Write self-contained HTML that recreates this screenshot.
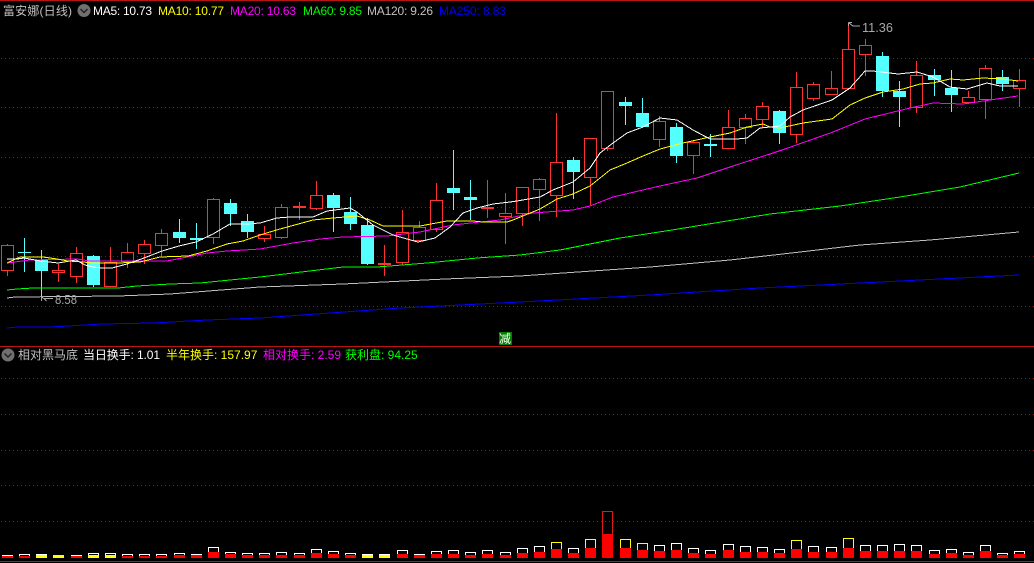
<!DOCTYPE html>
<html><head><meta charset="utf-8"><style>
html,body{margin:0;padding:0;background:#000;width:1034px;height:563px;overflow:hidden}
svg{display:block}
text{font-family:"Liberation Sans","WenQuanYi Zen Hei","Noto Sans CJK SC",sans-serif;font-size:12px}
</style></head><body>
<svg width="1034" height="563" viewBox="0 0 1034 563" xmlns="http://www.w3.org/2000/svg" shape-rendering="crispEdges">
<rect width="1034" height="563" fill="#000"/>
<g stroke="#9a1414" stroke-width="1" stroke-dasharray="1 3" fill="none">
<path d="M1 58.5H1034M1 107.5H1034M1 157.5H1034M1 207.5H1034M1 256.5H1034M1 306.5H1034M1 378.5H1034M1 414.5H1034M1 450.5H1034M1 485.5H1034M1 521.5H1034"/>
</g>
<path d="M0 .5H1034M0 346.5H1034M0 561.5H1034" stroke="#b81414" fill="none"/>

<!-- wicks red -->
<path stroke="#ff3232" fill="none" d="M7.5 244V276M58.5 264V282M76.5 247V283M110.5 247V287M127.5 243V268M144.5 240V264M161.5 229V256M213.5 198V244M264.5 226V242M281.5 204V239M299.5 202V220M316.5 181V210M384.5 245V276M402.5 210V265M419.5 221V242M436.5 183V232M487.5 180V218M505.5 193V244M522.5 187V226M539.5 178V221M556.5 113V217M590.5 138V205M607.5 91V151M659.5 116V147M693.5 141V174M728.5 110V149M745.5 114V144M762.5 102V128M796.5 72V143M813.5 82V101M831.5 71V95M848.5 24V89M865.5 39V76M916.5 61V113M968.5 91V104M985.5 65V119M1019.5 69V107"/>
<!-- bodies red -->
<path stroke="#ff3232" fill="#000" d="M1.5 245.5h12v25h-12zM52.5 270.5h12v2h-12zM70.5 253.5h12v23h-12zM104.5 262.5h12v24h-12zM121.5 252.5h12v9h-12zM138.5 244.5h12v9h-12zM155.5 233.5h12v12h-12zM207.5 199.5h12v38h-12zM258.5 234.5h12v4h-12zM275.5 207.5h12v30h-12zM293.5 206.5h12v1h-12zM310.5 195.5h12v13h-12zM378.5 263.5h12v1h-12zM396.5 232.5h12v30h-12zM413.5 227.5h12v13h-12zM430.5 200.5h12v29h-12zM481.5 207.5h12v1h-12zM499.5 213.5h12v3h-12zM516.5 187.5h12v26h-12zM533.5 179.5h12v10h-12zM550.5 162.5h12v33h-12zM584.5 138.5h12v39h-12zM601.5 91.5h12v57h-12zM653.5 121.5h12v18h-12zM687.5 142.5h12v13h-12zM722.5 127.5h12v21h-12zM739.5 118.5h12v9h-12zM756.5 106.5h12v13h-12zM790.5 87.5h12v47h-12zM807.5 84.5h12v14h-12zM825.5 88.5h12v6h-12zM842.5 49.5h12v39h-12zM859.5 45.5h12v9h-12zM910.5 75.5h12v32h-12zM962.5 97.5h12v5h-12zM979.5 68.5h12v31h-12zM1013.5 80.5h12v8h-12z"/>
<!-- cyan -->
<path stroke="#54ffff" fill="none" d="M24.5 238V272M41.5 250V298M93.5 255V287M179.5 219V243M196.5 223V249M230.5 199V226M247.5 214V238M333.5 193V232M350.5 197V230M367.5 218V265M453.5 150V210M470.5 180V220M573.5 157V199M625.5 97V125M642.5 98V127M676.5 123V163M710.5 134V157M779.5 110V144M882.5 52V97M899.5 81V127M934.5 69V96M951.5 70V112M1002.5 70V91"/>
<path fill="#54ffff" d="M18 252h13v1h-13zM35 260h13v11h-13zM87 256h13v29h-13zM173 232h13v6h-13zM190 238h13v2h-13zM224 203h13v11h-13zM241 221h13v11h-13zM327 195h13v13h-13zM344 212h13v12h-13zM361 225h13v39h-13zM447 188h13v5h-13zM464 197h13v3h-13zM567 160h13v12h-13zM619 102h13v4h-13zM636 113h13v14h-13zM670 127h13v29h-13zM704 144h13v2h-13zM773 111h13v22h-13zM876 56h13v35h-13zM893 91h13v6h-13zM928 75h13v5h-13zM945 88h13v7h-13zM996 77h13v7h-13z"/>

<!-- MA lines -->
<polyline fill="none" stroke="#0000ff" points="7,328 17,327 50,327 102,324 153,323 207,320 260,318 400,308 520,302 650,295 760,288 900,281 1019,275"/>
<polyline fill="none" stroke="#c0c0c0" points="7,298 15,297 118,296 170,294 260,287 343,284 445,279 520,276 650,267 730,260 800,252 860,245 930,240 1019,232"/>
<polyline fill="none" stroke="#00ff00" points="7,290 17,289 33,288 118,288 137,286 170,284 200,283 260,277 293,273 343,267 377,267 427,263 477,258 520,255 560,250 620,238 672,230 770,214 840,206 900,197 960,187 1019,173"/>
<polyline fill="none" stroke="#ff00ff" points="7,263 30,260 77,259 90,261 117,261 167,261 187,257 207,253 227,251 260,249 293,243 320,239 343,237 387,236 420,232 453,225 480,222 500,220 533,213 573,210 590,206 613,197 660,186 697,178 733,166 770,154 785,149 833,132 865,119 910,108 933,103 963,104 997,99 1018,96"/>
<polyline fill="none" stroke="#ffff00" points="7,263 20,257 43,257 57,259 68,261 83,262 93,263 118,263 140,262 160,257 188,256 207,251 227,244 243,241 260,235 280,229 313,220 333,218 357,216 370,220 383,226 420,226 447,221 473,221 483,222 507,222 513,220 540,209 557,199 573,194 590,186 610,170 627,163 643,156 660,149 683,143 710,137 730,133 747,127 763,124 770,127 780,128 803,123 832,119 850,105 865,98 883,92 903,89 920,84 933,83 950,79 963,80 983,78 1003,79 1018,81"/>
<polyline fill="none" stroke="#ffffff" points="7,259 17,259 24,258 41,261 58,263 76,260 85,265 93,267 102,268 112,268 127,264 144,258 162,251 179,246 196,242 213,234 230,224 247,224 260,223 277,218 290,217 313,217 327,211 350,208 357,212 373,225 393,235 407,239 418,242 435,238 450,227 463,213 477,208 493,204 510,202 517,201 540,197 553,190 573,182 590,168 600,153 613,143 627,133 643,127 660,118 677,120 693,130 710,139 737,139 747,138 760,128 770,127 780,126 790,117 803,110 832,100 850,88 865,71 873,71 898,74 917,72 933,77 950,87 967,89 987,83 1000,86 1018,86"/>

<!-- low / high labels -->
<path stroke="#a8a8a8" fill="none" d="M41.5 296.5V301M41.5 296.5H46M41.5 296.5L46.5 301M44 298.5H53"/>
<text x="55" y="304" fill="#a8a8a8" style="font-size:13px" textLength="22" lengthAdjust="spacingAndGlyphs">8.58</text>
<path stroke="#a8a8a8" fill="none" d="M848.5 22.5H852M848.5 22.5V26M849 23L853 26M853 26H860"/>
<text x="862" y="32" fill="#a8a8a8" style="font-size:13px" textLength="31" lengthAdjust="spacingAndGlyphs">11.36</text>

<!-- tag -->
<rect x="499" y="332" width="13" height="13" fill="#008000"/>
<text x="499" y="343" fill="#fff" font-size="12" style="font-size:12px">减</text>

<!-- header top -->
<text x="3" y="15" fill="#c0c0c0" textLength="69">富安娜(日线)</text>
<circle cx="84" cy="10.5" r="6.5" fill="#707070" shape-rendering="auto"/>
<path d="M80.5 9L84 12.5L87.5 9" stroke="#202020" stroke-width="1.4" fill="none" shape-rendering="auto"/>
<text x="93" y="15" fill="#ffffff" textLength="59">MA5: 10.73</text>
<text x="158" y="15" fill="#ffff00" textLength="66">MA10: 10.77</text>
<text x="230" y="15" fill="#ff00ff" textLength="66">MA20: 10.63</text>
<text x="303" y="15" fill="#00ff00" textLength="59">MA60: 9.85</text>
<text x="367" y="15" fill="#c0c0c0" textLength="66">MA120: 9.26</text>
<text x="439" y="15" fill="#0000ff" textLength="67">MA250: 8.83</text>

<!-- header bottom -->
<circle cx="8" cy="355" r="6.5" fill="#707070" shape-rendering="auto"/>
<path d="M4.5 353.5L8 357L11.5 353.5" stroke="#202020" stroke-width="1.4" fill="none" shape-rendering="auto"/>
<text x="18" y="359" fill="#c0c0c0">相对黑马底</text>
<text x="83" y="359" fill="#ffffff" textLength="77">当日换手: 1.01</text>
<text x="166" y="359" fill="#ffff00">半年换手: 157.97</text>
<text x="263" y="359" fill="#ff00ff">相对换手: 2.59</text>
<text x="345" y="359" fill="#00ff00">获利盘: 94.25</text>

<!-- volume outlines -->
<path stroke="#ffffff" fill="none" d="M2.5 558V555.5H12.5V558M19.5 558V554.5H29.5V558M36.5 558V554.5H46.5V558M71.5 558V555.5H81.5V558M88.5 558V553.5H98.5V558M105.5 558V553.5H115.5V558M122.5 558V554.5H132.5V558M139.5 558V554.5H149.5V558M156.5 558V554.5H166.5V558M174.5 558V553.5H184.5V558M191.5 558V554.5H201.5V558M208.5 558V547.5H218.5V558M225.5 558V552.5H235.5V558M242.5 558V553.5H252.5V558M259.5 558V553.5H269.5V558M276.5 558V552.5H286.5V558M294.5 558V553.5H304.5V558M311.5 558V549.5H321.5V558M328.5 558V551.5H338.5V558M345.5 558V553.5H355.5V558M362.5 558V554.5H372.5V558M379.5 558V554.5H389.5V558M397.5 558V550.5H407.5V558M414.5 558V554.5H424.5V558M431.5 558V551.5H441.5V558M448.5 558V550.5H458.5V558M465.5 558V552.5H475.5V558M482.5 558V550.5H492.5V558M500.5 558V552.5H510.5V558M517.5 558V548.5H527.5V558M534.5 558V546.5H544.5V558M568.5 558V548.5H578.5V558M654.5 558V545.5H664.5V558M671.5 558V543.5H681.5V558M688.5 558V548.5H698.5V558M705.5 558V550.5H715.5V558M723.5 558V544.5H733.5V558M740.5 558V546.5H750.5V558M757.5 558V547.5H767.5V558M774.5 558V549.5H784.5V558M808.5 558V546.5H818.5V558M826.5 558V547.5H836.5V558M860.5 558V545.5H870.5V558M877.5 558V545.5H887.5V558M894.5 558V544.5H904.5V558M911.5 558V545.5H921.5V558M929.5 558V550.5H939.5V558M946.5 558V549.5H956.5V558M963.5 558V552.5H973.5V558M980.5 558V545.5H990.5V558M997.5 558V553.5H1007.5V558M1014.5 558V551.5H1024.5V558"/>
<path stroke="#ffff00" fill="none" d="M551.5 558V542.5H561.5V558M585.5 558V539.5H595.5V558M620.5 558V539.5H630.5V558M637.5 558V543.5H647.5V558M791.5 558V540.5H801.5V558M843.5 558V538.5H853.5V558"/>
<path stroke="#e01818" fill="none" d="M602.5 558V511.5H612.5V558"/>
<!-- yellow fills -->
<path fill="#ffff00" d="M36 555h11v3h-11zM53 555h11v3h-11zM88 555h11v3h-11zM105 555h11v3h-11zM362 555h11v3h-11zM379 555h11v3h-11z"/>
<path fill="#ff0000" d="M2 556h11v2h-11zM19 556h11v2h-11zM71 556h11v2h-11zM122 556h11v2h-11zM139 556h11v2h-11zM156 556h11v2h-11zM174 555h11v3h-11zM191 555h11v3h-11zM208 552h11v6h-11zM225 554h11v4h-11zM242 555h11v3h-11zM259 555h11v3h-11zM276 555h11v3h-11zM294 555h11v3h-11zM311 553h11v5h-11zM328 554h11v4h-11zM345 555h11v3h-11zM397 554h11v4h-11zM414 555h11v3h-11zM431 554h11v4h-11zM448 554h11v4h-11zM465 555h11v3h-11zM482 554h11v4h-11zM500 555h11v3h-11zM517 553h11v5h-11zM534 552h11v6h-11zM551 549h11v9h-11zM568 553h11v5h-11zM585 548h11v10h-11zM602 534h11v24h-11zM620 548h11v10h-11zM637 550h11v8h-11zM654 551h11v7h-11zM671 550h11v8h-11zM688 553h11v5h-11zM705 554h11v4h-11zM723 550h11v8h-11zM740 552h11v6h-11zM757 552h11v6h-11zM774 553h11v5h-11zM791 549h11v9h-11zM808 552h11v6h-11zM826 552h11v6h-11zM843 548h11v10h-11zM860 551h11v7h-11zM877 551h11v7h-11zM894 551h11v7h-11zM911 551h11v7h-11zM929 554h11v4h-11zM946 553h11v5h-11zM963 555h11v3h-11zM980 551h11v7h-11zM997 555h11v3h-11zM1014 554h11v4h-11z"/>
</svg>
</body></html>
